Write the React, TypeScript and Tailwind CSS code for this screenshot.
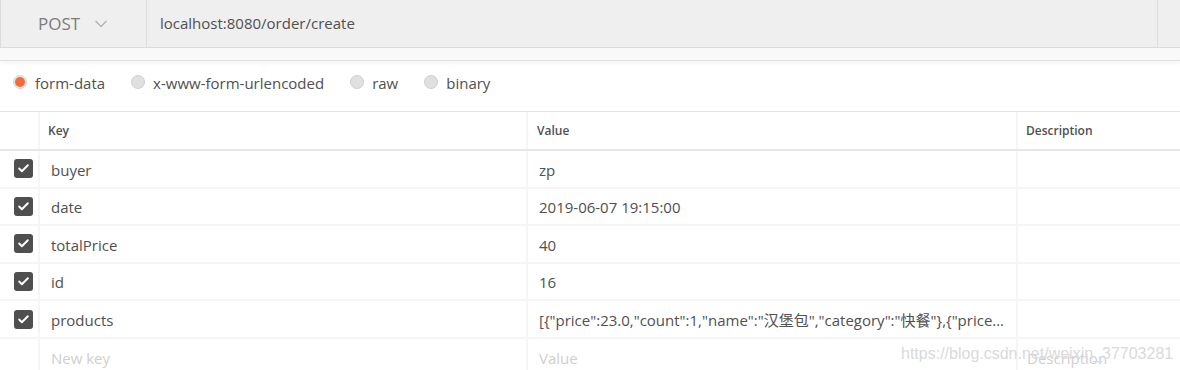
import { Check, ChevronDown } from "lucide-react";

const rows = [
  { key: "buyer", value: "zp" },
  { key: "date", value: "2019-06-07 19:15:00" },
  { key: "totalPrice", value: "40" },
  { key: "id", value: "16" },
  {
    key: "products",
    value:
      '[{"price":23.0,"count":1,"name":"汉堡包","category":"快餐"},{"price":23.0,"count":1}]',
  },
];

const bodyTypes = ["form-data", "x-www-form-urlencoded", "raw", "binary"];

const cols = "grid grid-cols-[40px_488px_490px_1fr]";

export default function App() {
  return (
    <div
      className="relative h-[370px] w-[1180px] overflow-hidden bg-white text-[#505050]"
      style={{ fontFamily: '"Open Sans", "Noto Sans CJK SC", sans-serif' }}
    >
      {/* request bar */}
      <div className="flex h-[48px] border-b border-[#dcdcdc] bg-[#efefef]">
        <div className="flex w-[146px] items-center border-l border-[#dcdcdc] pl-[37px] text-[17px] text-[#7c7c7c]">
          POST
          <ChevronDown className="ml-[11px] h-[20px] w-[20px] text-[#b8b8b8]" strokeWidth={2} />
        </div>
        <div className="flex flex-1 items-center border-l border-[#dcdcdc] pl-[13px] text-[15px] text-[#505050]">
          localhost:8080/order/create
        </div>
        <div className="w-[23px] border-l border-[#dcdcdc]" />
      </div>
      <div className="h-[13px] border-b border-[#e2e2e2] bg-[#f9f9f9] shadow-[0_2px_4px_rgba(0,0,0,0.05)]" />

      {/* body type radios */}
      <div className="flex h-[50px] items-center pb-[5px] pl-[13px] text-[15px]">
        {bodyTypes.map((t, i) => (
          <label key={t} className="mr-[26px] flex items-center">
            <span
              className={
                i === 0
                  ? "mr-[8px] -mt-[4px] flex h-[14px] w-[14px] items-center justify-center rounded-full border border-[#d4d4d4] bg-[#e8e8e8]"
                  : "mr-[8px] -mt-[4px] h-[14px] w-[14px] rounded-full border border-[#cfcfcf] bg-[#e0e0e0]"
              }
            >
              {i === 0 && <span className="h-[10px] w-[10px] rounded-full bg-[#f26b3a]" />}
            </span>
            {t}
          </label>
        ))}
      </div>

      {/* params table */}
      <div className="border-t border-[#e2e2e2]">
        <div className={`${cols} h-[39px] border-b-2 border-[#e6e6e6] text-[12px] font-semibold`}>
          <div className="border-r-2 border-[#f5f5f5]" />
          <div className="flex items-center border-r-2 border-[#f5f5f5] pl-[8px]">Key</div>
          <div className="flex items-center border-r-2 border-[#f5f5f5] pl-[9px]">Value</div>
          <div className="flex items-center pl-[8px]">Description</div>
        </div>
        {rows.map((r) => (
          <div key={r.key} className={`${cols} h-[37.6px] border-b-2 border-[#f5f5f5] text-[15px]`}>
            <div className="flex items-center border-r-2 border-[#f5f5f5] pl-[14px]">
              <span className="flex h-[19px] w-[19px] items-center justify-center rounded-[3px] bg-[#4f4f4f]">
                <Check className="h-[13px] w-[13px] text-white" strokeWidth={3.5} />
              </span>
            </div>
            <div className="flex items-center border-r-2 border-[#f5f5f5] pl-[11px] pt-[2px]">{r.key}</div>
            <div className="flex min-w-0 items-center border-r-2 border-[#f5f5f5] pl-[11px] pr-[12px] pt-[2px]">
              <span className="truncate">{r.value}</span>
            </div>
            <div />
          </div>
        ))}
        <div className={`${cols} h-[38px] text-[15px] text-[#cfcfcf]`}>
          <div className="border-r-2 border-[#f5f5f5]" />
          <div className="flex items-center border-r-2 border-[#f5f5f5] pl-[11px] pt-[1px]">New key</div>
          <div className="flex items-center border-r-2 border-[#f5f5f5] pl-[11px] pt-[1px]">Value</div>
          <div className="flex items-center pl-[9px] pt-[1px]">Description</div>
        </div>
      </div>

      {/* watermark */}
      <div
        className="absolute left-[901px] top-[342px] text-[16px] text-[#dadada]"
        style={{ fontFamily: '"Liberation Sans", sans-serif' }}
      >
        https://blog.csdn.net/weixin_37703281
      </div>
    </div>
  );
}
